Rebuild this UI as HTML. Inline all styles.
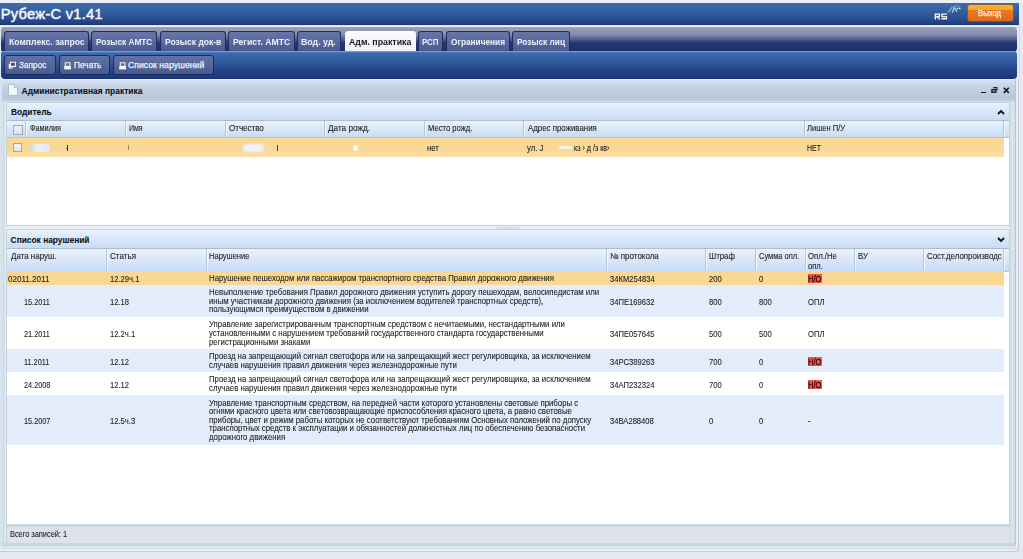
<!DOCTYPE html><html><head><meta charset="utf-8"><style>
*{margin:0;padding:0;box-sizing:border-box}
html,body{width:1023px;height:559px;overflow:hidden}
body{position:relative;background:#e5e9f4;font-family:"Liberation Sans", sans-serif;}
.a{position:absolute}
.t{position:absolute;white-space:nowrap;line-height:1}
.g{-webkit-text-stroke:0.08px currentColor}
.g2{-webkit-text-stroke:0.1px currentColor}
</style></head><body>
<div class="a" style="left:0;top:0;width:1023px;height:3px;background:#eceff7"></div>
<div class="a" style="left:0;top:3px;width:1019px;height:22px;background:linear-gradient(#3f6caa,#2f5798 55%,#21417f 92%,#1a3470)"></div>
<div class="t " style="left:0.8px;top:6.54px;font-size:14.6px;font-weight:400;color:#f4f6fb;-webkit-text-stroke:0.5px #f4f6fb;letter-spacing:0.3px;">Рубеж-С v1.41</div>

<svg class="a" style="left:934px;top:5px" width="28" height="16" viewBox="0 0 28 16"><path d="M1.4 14.4V9.1h3.9v2.5H1.4M3.3 11.6l2.3 2.8" fill="none" stroke="#f2f5fb" stroke-width="1.45"/><path d="M12.8 9.1H7.9v2.5h4.5v2.1H7.4" fill="none" stroke="#f2f5fb" stroke-width="1.45"/></svg>
<svg class="a" style="left:944px;top:3px" width="20" height="12" viewBox="0 0 20 12"><path d="M4.3 9.6L8.2 3.8" stroke="#86a8d6" stroke-width="1.5" fill="none"/><path d="M8.2 9.6L10.3 4.6L12.9 8.8" stroke="#a0bfd6" stroke-width="1.5" fill="none"/><path d="M8.5 3.8Q12 2.2 16.5 3" stroke="#7399c8" stroke-width="1.2" fill="none"/><circle cx="13.4" cy="5.4" r="0.9" fill="#d6eee6"/><circle cx="15.6" cy="5.4" r="0.9" fill="#d6eee6"/></svg>
<div class="a" style="left:968px;top:5px;width:45px;height:15.5px;border-radius:2px;background:linear-gradient(#f6b634,#f0a42a 30%,#e97a1e 33%,#e46f1a 75%,#dc6a1c);box-shadow:0 0 0 0.6px #b85a18"></div>
<div class="t " style="left:978.4px;top:8.89px;font-size:8.4px;font-weight:400;color:#fff3e2;-webkit-text-stroke:0.25px #fff3e2;transform:scaleX(0.92);transform-origin:0 0">Выход</div>

<div class="a" style="left:0;top:25px;width:1019px;height:2.5px;background:linear-gradient(#d6e2f0,#e8f2fc 50%,#c9d3e2)"></div>
<div class="a" style="left:1px;top:27px;width:1016px;height:25px;border-radius:3px 4px 4px 3px;background:linear-gradient(#9aa1bb,#858dac 30%,#4e5b8c 50%,#24376f 63%,#1c2f66)"></div>
<div class="a" style="left:4px;top:31px;width:85px;height:20px;border:1px solid #1f2c5e;border-bottom:none;border-radius:3px 3px 0 0;background:linear-gradient(#6676a6,#5868a0 55%,#4a5a90)"></div>
<div class="t " style="left:8.8px;top:37.74px;font-size:8.7px;font-weight:700;color:#eef1f8;transform:scaleX(0.997);transform-origin:0 0;">Комплекс. запрос</div>

<div class="a" style="left:91px;top:31px;width:66px;height:20px;border:1px solid #1f2c5e;border-bottom:none;border-radius:3px 3px 0 0;background:linear-gradient(#6676a6,#5868a0 55%,#4a5a90)"></div>
<div class="t " style="left:95.9px;top:37.74px;font-size:8.7px;font-weight:700;color:#eef1f8;transform:scaleX(0.951);transform-origin:0 0;">Розыск АМТС</div>

<div class="a" style="left:160px;top:31px;width:66px;height:20px;border:1px solid #1f2c5e;border-bottom:none;border-radius:3px 3px 0 0;background:linear-gradient(#6676a6,#5868a0 55%,#4a5a90)"></div>
<div class="t " style="left:165px;top:37.74px;font-size:8.7px;font-weight:700;color:#eef1f8;transform:scaleX(0.979);transform-origin:0 0;">Розыск док-в</div>

<div class="a" style="left:228px;top:31px;width:67px;height:20px;border:1px solid #1f2c5e;border-bottom:none;border-radius:3px 3px 0 0;background:linear-gradient(#6676a6,#5868a0 55%,#4a5a90)"></div>
<div class="t " style="left:232.7px;top:37.74px;font-size:8.7px;font-weight:700;color:#eef1f8;transform:scaleX(0.993);transform-origin:0 0;">Регист. АМТС</div>

<div class="a" style="left:297px;top:31px;width:44px;height:20px;border:1px solid #1f2c5e;border-bottom:none;border-radius:3px 3px 0 0;background:linear-gradient(#6676a6,#5868a0 55%,#4a5a90)"></div>
<div class="t " style="left:301.4px;top:37.74px;font-size:8.7px;font-weight:700;color:#eef1f8;transform:scaleX(1.009);transform-origin:0 0;">Вод. уд.</div>

<div class="a" style="left:345px;top:31px;width:71px;height:21px;border-radius:3px 3px 0 0;background:linear-gradient(#fafbfd,#eef1f7)"></div>
<div class="t " style="left:349px;top:37.64px;font-size:8.7px;font-weight:700;color:#1a1a1a;transform:scaleX(1.013);transform-origin:0 0;">Адм. практика</div>

<div class="a" style="left:418px;top:31px;width:25px;height:20px;border:1px solid #1f2c5e;border-bottom:none;border-radius:3px 3px 0 0;background:linear-gradient(#6676a6,#5868a0 55%,#4a5a90)"></div>
<div class="t " style="left:422.3px;top:37.74px;font-size:8.7px;font-weight:700;color:#eef1f8;transform:scaleX(0.906);transform-origin:0 0;">РСП</div>

<div class="a" style="left:446px;top:31px;width:64px;height:20px;border:1px solid #1f2c5e;border-bottom:none;border-radius:3px 3px 0 0;background:linear-gradient(#6676a6,#5868a0 55%,#4a5a90)"></div>
<div class="t " style="left:450.8px;top:37.74px;font-size:8.7px;font-weight:700;color:#eef1f8;transform:scaleX(0.954);transform-origin:0 0;">Ограничения</div>

<div class="a" style="left:512px;top:31px;width:58px;height:20px;border:1px solid #1f2c5e;border-bottom:none;border-radius:3px 3px 0 0;background:linear-gradient(#6676a6,#5868a0 55%,#4a5a90)"></div>
<div class="t " style="left:516.6px;top:37.74px;font-size:8.7px;font-weight:700;color:#eef1f8;transform:scaleX(0.954);transform-origin:0 0;">Розыск лиц</div>

<div class="a" style="left:1px;top:51px;width:1016px;height:27.5px;border-radius:3px 4px 4px 4px;background:linear-gradient(#80aae0,#3c6aad 7%,#3461a4 30%,#26468a 65%,#1b3574 100%)"></div>
<div class="a" style="left:4px;top:55px;width:52px;height:20px;border:1px solid #1c2b60;border-radius:3px;background:linear-gradient(#6272a2,#56679a 50%,#4a5b90)"></div>
<div class="t " style="left:19px;top:60.94px;font-size:8.7px;font-weight:400;color:#eef1f8;-webkit-text-stroke:0.25px #eef1f8;transform:scaleX(0.95);transform-origin:0 0;">Запрос</div>

<div class="a" style="left:59px;top:55px;width:51px;height:20px;border:1px solid #1c2b60;border-radius:3px;background:linear-gradient(#6272a2,#56679a 50%,#4a5b90)"></div>
<div class="t " style="left:74.2px;top:60.94px;font-size:8.7px;font-weight:400;color:#eef1f8;-webkit-text-stroke:0.25px #eef1f8;transform:scaleX(0.96);transform-origin:0 0;">Печать</div>

<div class="a" style="left:113px;top:55px;width:101px;height:20px;border:1px solid #1c2b60;border-radius:3px;background:linear-gradient(#6272a2,#56679a 50%,#4a5b90)"></div>
<div class="t " style="left:128px;top:60.94px;font-size:8.7px;font-weight:400;color:#eef1f8;-webkit-text-stroke:0.25px #eef1f8;transform:scaleX(1.0);transform-origin:0 0;">Список нарушений</div>

<svg class="a" style="left:8px;top:61px" width="9" height="8" viewBox="0 0 9 8"><path d="M2.4 1.3h5v4.1h-5z" fill="#3e4a7a" stroke="#f2f5fb" stroke-width="1.1"/><path d="M1.4 3v3.9h3.4" fill="none" stroke="#f2f5fb" stroke-width="1.4"/></svg>
<svg class="a" style="left:64px;top:61.5px" width="8" height="8" viewBox="0 0 8 8"><path d="M1.3 0.8h4.6v3.6H1.3z" fill="none" stroke="#eef2fa" stroke-width="1.1"/><path d="M0.2 4.2h6.8v3.2H0.2z" fill="#f4f7fc"/></svg>
<svg class="a" style="left:119px;top:61.5px" width="8" height="8" viewBox="0 0 8 8"><path d="M1.3 0.8h4.6v3.6H1.3z" fill="none" stroke="#eef2fa" stroke-width="1.1"/><path d="M0.2 4.2h6.8v3.2H0.2z" fill="#f4f7fc"/></svg>
<div class="a" style="left:0;top:78.5px;width:1019px;height:473.5px;background:#e9eef6;border-right:1px solid #c2ccd8;border-bottom:1px solid #c2ccd8;border-radius:0 0 3px 0"></div>
<div class="a" style="left:0;top:78.5px;width:1016px;height:468.5px;background:#d3dfe7;border-right:1px solid #bac6ce;border-radius:0 0 2px 0"></div>
<div class="a" style="left:1012px;top:100px;width:1px;height:444px;background:#e2eaf0"></div>
<div class="a" style="left:5px;top:100px;width:1px;height:444px;background:#e6eef2"></div>
<div class="a" style="left:2px;top:78.5px;width:1013px;height:1.5px;background:#e6edf6"></div>
<div class="a" style="left:2px;top:80px;width:1013px;height:21px;background:linear-gradient(#d8e3f1,#c5d3e6 30%,#b6c7dd 85%,#c2cede)"></div>
<div class="t g" style="left:21.6px;top:86.85px;font-size:8.45px;font-weight:700;color:#111;">Административная практика</div>

<div class="a" style="left:980.8px;top:91.7px;width:5px;height:1.4px;background:#1a1a1a"></div>
<svg class="a" style="left:991px;top:87px" width="7" height="6" viewBox="0 0 7 6"><path d="M2.3 0.6H5.9V3.4" fill="none" stroke="#1e1e1e" stroke-width="1.1"/><rect x="0.9" y="2.6" width="4" height="2.7" fill="#9aa4b0" stroke="#1e1e1e" stroke-width="1.3"/></svg>
<svg class="a" style="left:1003px;top:86.5px" width="7" height="7" viewBox="0 0 7 7"><path d="M0.8 0.8L5.8 5.9M5.8 0.8L0.8 5.9" stroke="#151515" stroke-width="1.6"/></svg>
<svg class="a" style="left:8px;top:84px" width="10" height="12" viewBox="0 0 10 12"><path d="M0.5 0.5h6l3 3v8h-9z" fill="#f6f9fc" stroke="#aebdd0" stroke-width="1"/><path d="M6.5 0.5v3h3" fill="#dde6f0" stroke="#aebdd0" stroke-width="1"/></svg>
<div class="a" style="left:6px;top:102px;width:1004px;height:124px;background:#fff;border:1px solid #c6d2dc;border-bottom:none"></div>
<div class="a" style="left:7px;top:103px;width:1002px;height:17.5px;background:linear-gradient(#eaf2fd,#d8e6f9 50%,#c9dcf5);border-bottom:1px solid #aebdd0"></div>
<div class="t g" style="left:10.9px;top:108.49px;font-size:8.4px;font-weight:700;color:#111;">Водитель</div>

<svg class="a" style="left:997px;top:109px" width="8" height="6" viewBox="0 0 8 6"><path d="M1 5L4 2L7 5" fill="none" stroke="#111" stroke-width="1.8"/></svg>
<div class="a" style="left:7px;top:120.5px;width:1002px;height:17.5px;background:linear-gradient(#eaf2fc,#d9e7f9 50%,#c9dcf5);border-bottom:1px solid #c7c1ad"></div>
<div class="a" style="left:25px;top:121px;width:1px;height:16px;background:#b4c6dc"></div>
<div class="a" style="left:26px;top:121px;width:1px;height:16px;background:#f4f8fd"></div>
<div class="a" style="left:125px;top:121px;width:1px;height:16px;background:#b4c6dc"></div>
<div class="a" style="left:126px;top:121px;width:1px;height:16px;background:#f4f8fd"></div>
<div class="a" style="left:225px;top:121px;width:1px;height:16px;background:#b4c6dc"></div>
<div class="a" style="left:226px;top:121px;width:1px;height:16px;background:#f4f8fd"></div>
<div class="a" style="left:324px;top:121px;width:1px;height:16px;background:#b4c6dc"></div>
<div class="a" style="left:325px;top:121px;width:1px;height:16px;background:#f4f8fd"></div>
<div class="a" style="left:424px;top:121px;width:1px;height:16px;background:#b4c6dc"></div>
<div class="a" style="left:425px;top:121px;width:1px;height:16px;background:#f4f8fd"></div>
<div class="a" style="left:523px;top:121px;width:1px;height:16px;background:#b4c6dc"></div>
<div class="a" style="left:524px;top:121px;width:1px;height:16px;background:#f4f8fd"></div>
<div class="a" style="left:804px;top:121px;width:1px;height:16px;background:#b4c6dc"></div>
<div class="a" style="left:805px;top:121px;width:1px;height:16px;background:#f4f8fd"></div>
<div class="a" style="left:1003px;top:121px;width:1px;height:16px;background:#b4c6dc"></div>
<div class="a" style="left:1004px;top:121px;width:1px;height:16px;background:#f4f8fd"></div>
<div class="a" style="left:13px;top:125px;width:10px;height:10px;border:1px solid #a3aab4;background:linear-gradient(#eef0f3,#dfe3e8)"></div>
<div class="t g2" style="left:29.6px;top:124.39px;font-size:8.4px;font-weight:400;color:#1e1e1e;transform:scaleX(0.871);transform-origin:0 0;">Фамилия</div>

<div class="t g2" style="left:129.3px;top:124.39px;font-size:8.4px;font-weight:400;color:#1e1e1e;transform:scaleX(0.836);transform-origin:0 0;">Имя</div>

<div class="t g2" style="left:229px;top:124.39px;font-size:8.4px;font-weight:400;color:#1e1e1e;transform:scaleX(0.955);transform-origin:0 0;">Отчество</div>

<div class="t g2" style="left:328px;top:124.39px;font-size:8.4px;font-weight:400;color:#1e1e1e;transform:scaleX(0.98);transform-origin:0 0;">Дата рожд.</div>

<div class="t g2" style="left:428px;top:124.39px;font-size:8.4px;font-weight:400;color:#1e1e1e;transform:scaleX(0.913);transform-origin:0 0;">Место рожд.</div>

<div class="t g2" style="left:527.6px;top:124.39px;font-size:8.4px;font-weight:400;color:#1e1e1e;transform:scaleX(0.94);transform-origin:0 0;">Адрес проживания</div>

<div class="t g2" style="left:807.1px;top:124.39px;font-size:8.4px;font-weight:400;color:#1e1e1e;transform:scaleX(0.905);transform-origin:0 0;">Лишен П/У</div>

<div class="a" style="left:7px;top:138px;width:997px;height:18.5px;background:linear-gradient(#fad792,#f9d896 60%,#fbdfa6)"></div>
<div class="a" style="left:13px;top:143px;width:9px;height:9px;border:1px solid #a3a9b0;background:linear-gradient(#eff1f4,#e0e4ea)"></div>
<div class="t g" style="left:427px;top:144.49px;font-size:8.4px;font-weight:400;color:#1a1a1a;transform:scaleX(0.93);transform-origin:0 0;">нет</div>

<div class="t g" style="left:527px;top:144.49px;font-size:8.4px;font-weight:400;color:#1a1a1a;transform:scaleX(0.93);transform-origin:0 0;">ул. J</div>

<div class="t g" style="left:807px;top:144.49px;font-size:8.4px;font-weight:400;color:#1a1a1a;transform:scaleX(0.83);transform-origin:0 0;">НЕТ</div>

<div class="t g" style="left:574px;top:144.49px;font-size:8.4px;font-weight:400;color:#1a1a1a;transform:scaleX(0.85);transform-origin:0 0;">кз › д /з кв›</div>

<div class="a" style="left:28.5px;top:144px;width:21px;height:8px;border-radius:2px 4px 4px 2px;background:linear-gradient(90deg,#d8d6d0,#eeeeec 40%,#e6eefa 70%,#dfe9f8);filter:blur(0.7px)"></div>
<div class="a" style="left:243px;top:144px;width:21px;height:8px;border-radius:4px;background:#eef3fb;filter:blur(1px)"></div>
<div class="a" style="left:559px;top:146px;width:13px;height:3px;border-radius:2px;background:#f6f3ea;filter:blur(0.6px)"></div>
<div class="a" style="left:353px;top:145px;width:5px;height:6px;border-radius:3px;background:#fbf6ec;filter:blur(0.6px)"></div>
<div class="a" style="left:67px;top:145px;width:1px;height:6px;background:#333"></div><div class="a" style="left:66px;top:147.5px;width:1.2px;height:1.2px;background:#555"></div>
<div class="a" style="left:128px;top:145px;width:1px;height:5px;background:#9a8a70"></div>
<div class="a" style="left:277px;top:145px;width:1px;height:6px;background:#444"></div>
<div class="a" style="left:6px;top:225px;width:1004px;height:5px;background:#e9eef5;border-top:1px solid #c5cdd6;border-bottom:1px solid #c5cdd6"></div>
<div class="a" style="left:497px;top:227px;width:22px;height:1.5px;background:#d9dee5"></div>
<div class="a" style="left:6px;top:229px;width:1004px;height:295px;background:#fff;border:1px solid #c6d2dc;border-bottom:none"></div>
<div class="a" style="left:7px;top:230px;width:1002px;height:18.5px;background:linear-gradient(#eaf2fd,#d8e6f9 50%,#c9dcf5);border-bottom:1px solid #aebdd0"></div>
<div class="t g" style="left:10.6px;top:236.09px;font-size:8.4px;font-weight:700;color:#111;">Список нарушений</div>

<svg class="a" style="left:997px;top:237px" width="8" height="6" viewBox="0 0 8 6"><path d="M1 1L4 4L7 1" fill="none" stroke="#111" stroke-width="1.8"/></svg>
<div class="a" style="left:7px;top:248.5px;width:1002px;height:23px;background:linear-gradient(#eaf2fc,#d9e7f9 50%,#c9dcf5);border-bottom:1px solid #c7c1ad"></div>
<div class="a" style="left:106px;top:249px;width:1px;height:21px;background:#b4c6dc"></div>
<div class="a" style="left:107px;top:249px;width:1px;height:21px;background:#f4f8fd"></div>
<div class="a" style="left:206px;top:249px;width:1px;height:21px;background:#b4c6dc"></div>
<div class="a" style="left:207px;top:249px;width:1px;height:21px;background:#f4f8fd"></div>
<div class="a" style="left:606px;top:249px;width:1px;height:21px;background:#b4c6dc"></div>
<div class="a" style="left:607px;top:249px;width:1px;height:21px;background:#f4f8fd"></div>
<div class="a" style="left:705px;top:249px;width:1px;height:21px;background:#b4c6dc"></div>
<div class="a" style="left:706px;top:249px;width:1px;height:21px;background:#f4f8fd"></div>
<div class="a" style="left:755px;top:249px;width:1px;height:21px;background:#b4c6dc"></div>
<div class="a" style="left:756px;top:249px;width:1px;height:21px;background:#f4f8fd"></div>
<div class="a" style="left:805px;top:249px;width:1px;height:21px;background:#b4c6dc"></div>
<div class="a" style="left:806px;top:249px;width:1px;height:21px;background:#f4f8fd"></div>
<div class="a" style="left:854px;top:249px;width:1px;height:21px;background:#b4c6dc"></div>
<div class="a" style="left:855px;top:249px;width:1px;height:21px;background:#f4f8fd"></div>
<div class="a" style="left:923px;top:249px;width:1px;height:21px;background:#b4c6dc"></div>
<div class="a" style="left:924px;top:249px;width:1px;height:21px;background:#f4f8fd"></div>
<div class="a" style="left:1003px;top:249px;width:1px;height:21px;background:#b4c6dc"></div>
<div class="a" style="left:1004px;top:249px;width:1px;height:21px;background:#f4f8fd"></div>
<div class="t g2" style="left:10.6px;top:252.49px;font-size:8.4px;font-weight:400;color:#1e1e1e;transform:scaleX(0.95);transform-origin:0 0;">Дата наруш.</div>

<div class="t g2" style="left:110.3px;top:252.49px;font-size:8.4px;font-weight:400;color:#1e1e1e;transform:scaleX(0.963);transform-origin:0 0;">Статья</div>

<div class="t g2" style="left:208.8px;top:252.49px;font-size:8.4px;font-weight:400;color:#1e1e1e;transform:scaleX(0.903);transform-origin:0 0;">Нарушение</div>

<div class="t g2" style="left:610px;top:252.49px;font-size:8.4px;font-weight:400;color:#1e1e1e;transform:scaleX(0.954);transform-origin:0 0;">№ протокола</div>

<div class="t g2" style="left:709px;top:252.49px;font-size:8.4px;font-weight:400;color:#1e1e1e;transform:scaleX(0.934);transform-origin:0 0;">Штраф</div>

<div class="t g2" style="left:758.8px;top:252.49px;font-size:8.4px;font-weight:400;color:#1e1e1e;transform:scaleX(0.89);transform-origin:0 0;">Сумма опл.</div>

<div class="t g2" style="left:808px;top:252.49px;font-size:8.4px;font-weight:400;color:#1e1e1e;transform:scaleX(0.921);transform-origin:0 0;">Опл./Не</div>

<div class="t g2" style="left:857.6px;top:252.49px;font-size:8.4px;font-weight:400;color:#1e1e1e;transform:scaleX(0.934);transform-origin:0 0;">ВУ</div>

<div class="t g2" style="left:927.3px;top:252.49px;font-size:8.4px;font-weight:400;color:#1e1e1e;transform:scaleX(0.942);transform-origin:0 0;">Сост.делопроизводс</div>

<div class="t g2" style="left:808px;top:262.09px;font-size:8.4px;font-weight:400;color:#1e1e1e;transform:scaleX(0.904);transform-origin:0 0;">опл.</div>

<div class="a" style="left:7px;top:271px;width:997px;height:13.5px;background:#fad792"></div>
<div class="t g" style="left:8px;top:274.84px;font-size:8.4px;font-weight:400;color:#1b1b1b;transform:scaleX(0.963);transform-origin:0 0;">02011.2011</div>

<div class="t g" style="left:110.3px;top:274.84px;font-size:8.4px;font-weight:400;color:#1b1b1b;transform:scaleX(0.91);transform-origin:0 0;">12.29ч.1</div>

<div class="t g" style="left:208.8px;top:273.84px;font-size:8.4px;font-weight:400;color:#1b1b1b;transform:scaleX(0.933);transform-origin:0 0;">Нарушение пешеходом или пассажиром транспортного средства Правил дорожного движения</div>

<div class="t g" style="left:610px;top:274.84px;font-size:8.4px;font-weight:400;color:#1b1b1b;transform:scaleX(0.91);transform-origin:0 0;">34КМ254834</div>

<div class="t g" style="left:709px;top:274.84px;font-size:8.4px;font-weight:400;color:#1b1b1b;transform:scaleX(0.91);transform-origin:0 0;">200</div>

<div class="t g" style="left:758.8px;top:274.84px;font-size:8.4px;font-weight:400;color:#1b1b1b;transform:scaleX(0.91);transform-origin:0 0;">0</div>

<div class="a" style="left:808px;top:274.1px;width:14px;height:8.8px;background:#ec5a4c"></div>
<div class="t g" style="left:808.3px;top:274.84px;font-size:8.4px;font-weight:400;color:#3a0606;-webkit-text-stroke:0.3px #3a0606;transform:scaleX(0.9);transform-origin:0 0;">Н/О</div>

<div class="a" style="left:7px;top:284.5px;width:997px;height:32.5px;background:#e3ecfb"></div>
<div class="t g" style="left:24px;top:297.84px;font-size:8.4px;font-weight:400;color:#1b1b1b;transform:scaleX(0.87);transform-origin:0 0;">15.2011</div>

<div class="t g" style="left:110.3px;top:297.84px;font-size:8.4px;font-weight:400;color:#1b1b1b;transform:scaleX(0.91);transform-origin:0 0;">12.18</div>

<div class="t g" style="left:208.8px;top:288.24px;font-size:8.4px;font-weight:400;color:#1b1b1b;transform:scaleX(0.933);transform-origin:0 0;">Невыполнение требования Правил дорожного движения уступить дорогу пешеходам, велосипедистам или</div>

<div class="t g" style="left:208.8px;top:296.84px;font-size:8.4px;font-weight:400;color:#1b1b1b;transform:scaleX(0.933);transform-origin:0 0;">иным участникам дорожного движения (за исключением водителей транспортных средств),</div>

<div class="t g" style="left:208.8px;top:305.44px;font-size:8.4px;font-weight:400;color:#1b1b1b;transform:scaleX(0.933);transform-origin:0 0;">пользующимся преимуществом в движении</div>

<div class="t g" style="left:610px;top:297.84px;font-size:8.4px;font-weight:400;color:#1b1b1b;transform:scaleX(0.91);transform-origin:0 0;">34ПЕ169632</div>

<div class="t g" style="left:709px;top:297.84px;font-size:8.4px;font-weight:400;color:#1b1b1b;transform:scaleX(0.91);transform-origin:0 0;">800</div>

<div class="t g" style="left:758.8px;top:297.84px;font-size:8.4px;font-weight:400;color:#1b1b1b;transform:scaleX(0.91);transform-origin:0 0;">800</div>

<div class="t g" style="left:808px;top:297.84px;font-size:8.4px;font-weight:400;color:#1b1b1b;transform:scaleX(0.91);transform-origin:0 0;">ОПЛ</div>

<div class="a" style="left:7px;top:317px;width:997px;height:32.0px;background:#ffffff"></div>
<div class="t g" style="left:24px;top:330.09px;font-size:8.4px;font-weight:400;color:#1b1b1b;transform:scaleX(0.87);transform-origin:0 0;">21.2011</div>

<div class="t g" style="left:110.3px;top:330.09px;font-size:8.4px;font-weight:400;color:#1b1b1b;transform:scaleX(0.91);transform-origin:0 0;">12.2ч.1</div>

<div class="t g" style="left:208.8px;top:320.49px;font-size:8.4px;font-weight:400;color:#1b1b1b;transform:scaleX(0.933);transform-origin:0 0;">Управление зарегистрированным транспортным средством с нечитаемыми, нестандартными или</div>

<div class="t g" style="left:208.8px;top:329.09px;font-size:8.4px;font-weight:400;color:#1b1b1b;transform:scaleX(0.933);transform-origin:0 0;">установленными с нарушением требований государственного стандарта государственными</div>

<div class="t g" style="left:208.8px;top:337.69px;font-size:8.4px;font-weight:400;color:#1b1b1b;transform:scaleX(0.933);transform-origin:0 0;">регистрационными знаками</div>

<div class="t g" style="left:610px;top:330.09px;font-size:8.4px;font-weight:400;color:#1b1b1b;transform:scaleX(0.91);transform-origin:0 0;">34ПЕ057645</div>

<div class="t g" style="left:709px;top:330.09px;font-size:8.4px;font-weight:400;color:#1b1b1b;transform:scaleX(0.91);transform-origin:0 0;">500</div>

<div class="t g" style="left:758.8px;top:330.09px;font-size:8.4px;font-weight:400;color:#1b1b1b;transform:scaleX(0.91);transform-origin:0 0;">500</div>

<div class="t g" style="left:808px;top:330.09px;font-size:8.4px;font-weight:400;color:#1b1b1b;transform:scaleX(0.91);transform-origin:0 0;">ОПЛ</div>

<div class="a" style="left:7px;top:349px;width:997px;height:23.2px;background:#e3ecfb"></div>
<div class="t g" style="left:24px;top:357.69px;font-size:8.4px;font-weight:400;color:#1b1b1b;transform:scaleX(0.87);transform-origin:0 0;">11.2011</div>

<div class="t g" style="left:110.3px;top:357.69px;font-size:8.4px;font-weight:400;color:#1b1b1b;transform:scaleX(0.91);transform-origin:0 0;">12.12</div>

<div class="t g" style="left:208.8px;top:352.39px;font-size:8.4px;font-weight:400;color:#1b1b1b;transform:scaleX(0.933);transform-origin:0 0;">Проезд на запрещающий сигнал светофора или на запрещающий жест регулировщика, за исключением</div>

<div class="t g" style="left:208.8px;top:360.99px;font-size:8.4px;font-weight:400;color:#1b1b1b;transform:scaleX(0.933);transform-origin:0 0;">случаев нарушения правил движения через железнодорожные пути</div>

<div class="t g" style="left:610px;top:357.69px;font-size:8.4px;font-weight:400;color:#1b1b1b;transform:scaleX(0.91);transform-origin:0 0;">34РС389263</div>

<div class="t g" style="left:709px;top:357.69px;font-size:8.4px;font-weight:400;color:#1b1b1b;transform:scaleX(0.91);transform-origin:0 0;">700</div>

<div class="t g" style="left:758.8px;top:357.69px;font-size:8.4px;font-weight:400;color:#1b1b1b;transform:scaleX(0.91);transform-origin:0 0;">0</div>

<div class="a" style="left:808px;top:357.0px;width:14px;height:8.8px;background:#ec5a4c"></div>
<div class="t g" style="left:808.3px;top:357.69px;font-size:8.4px;font-weight:400;color:#3a0606;-webkit-text-stroke:0.3px #3a0606;transform:scaleX(0.9);transform-origin:0 0;">Н/О</div>

<div class="a" style="left:7px;top:372.2px;width:997px;height:22.8px;background:#ffffff"></div>
<div class="t g" style="left:24px;top:380.69px;font-size:8.4px;font-weight:400;color:#1b1b1b;transform:scaleX(0.87);transform-origin:0 0;">24.2008</div>

<div class="t g" style="left:110.3px;top:380.69px;font-size:8.4px;font-weight:400;color:#1b1b1b;transform:scaleX(0.91);transform-origin:0 0;">12.12</div>

<div class="t g" style="left:208.8px;top:375.39px;font-size:8.4px;font-weight:400;color:#1b1b1b;transform:scaleX(0.933);transform-origin:0 0;">Проезд на запрещающий сигнал светофора или на запрещающий жест регулировщика, за исключением</div>

<div class="t g" style="left:208.8px;top:383.99px;font-size:8.4px;font-weight:400;color:#1b1b1b;transform:scaleX(0.933);transform-origin:0 0;">случаев нарушения правил движения через железнодорожные пути</div>

<div class="t g" style="left:610px;top:380.69px;font-size:8.4px;font-weight:400;color:#1b1b1b;transform:scaleX(0.91);transform-origin:0 0;">34АП232324</div>

<div class="t g" style="left:709px;top:380.69px;font-size:8.4px;font-weight:400;color:#1b1b1b;transform:scaleX(0.91);transform-origin:0 0;">700</div>

<div class="t g" style="left:758.8px;top:380.69px;font-size:8.4px;font-weight:400;color:#1b1b1b;transform:scaleX(0.91);transform-origin:0 0;">0</div>

<div class="a" style="left:808px;top:380.0px;width:14px;height:8.8px;background:#ec5a4c"></div>
<div class="t g" style="left:808.3px;top:380.69px;font-size:8.4px;font-weight:400;color:#3a0606;-webkit-text-stroke:0.3px #3a0606;transform:scaleX(0.9);transform-origin:0 0;">Н/О</div>

<div class="a" style="left:7px;top:395px;width:997px;height:49.5px;background:#e3ecfb"></div>
<div class="t g" style="left:24px;top:416.84px;font-size:8.4px;font-weight:400;color:#1b1b1b;transform:scaleX(0.87);transform-origin:0 0;">15.2007</div>

<div class="t g" style="left:110.3px;top:416.84px;font-size:8.4px;font-weight:400;color:#1b1b1b;transform:scaleX(0.91);transform-origin:0 0;">12.5ч.3</div>

<div class="t g" style="left:208.8px;top:398.64px;font-size:8.4px;font-weight:400;color:#1b1b1b;transform:scaleX(0.933);transform-origin:0 0;">Управление транспортным средством, на передней части которого установлены световые приборы с</div>

<div class="t g" style="left:208.8px;top:407.24px;font-size:8.4px;font-weight:400;color:#1b1b1b;transform:scaleX(0.933);transform-origin:0 0;">огнями красного цвета или световозвращающие приспособления красного цвета, а равно световые</div>

<div class="t g" style="left:208.8px;top:415.84px;font-size:8.4px;font-weight:400;color:#1b1b1b;transform:scaleX(0.933);transform-origin:0 0;">приборы, цвет и режим работы которых не соответствуют требованиям Основных положений по допуску</div>

<div class="t g" style="left:208.8px;top:424.44px;font-size:8.4px;font-weight:400;color:#1b1b1b;transform:scaleX(0.933);transform-origin:0 0;">транспортных средств к эксплуатации и обязанностей должностных лиц по обеспечению безопасности</div>

<div class="t g" style="left:208.8px;top:433.04px;font-size:8.4px;font-weight:400;color:#1b1b1b;transform:scaleX(0.933);transform-origin:0 0;">дорожного движения</div>

<div class="t g" style="left:610px;top:416.84px;font-size:8.4px;font-weight:400;color:#1b1b1b;transform:scaleX(0.91);transform-origin:0 0;">34ВА288408</div>

<div class="t g" style="left:709px;top:416.84px;font-size:8.4px;font-weight:400;color:#1b1b1b;transform:scaleX(0.91);transform-origin:0 0;">0</div>

<div class="t g" style="left:758.8px;top:416.84px;font-size:8.4px;font-weight:400;color:#1b1b1b;transform:scaleX(0.91);transform-origin:0 0;">0</div>

<div class="t g" style="left:808px;top:416.84px;font-size:8.4px;font-weight:400;color:#1b1b1b;transform:scaleX(0.91);transform-origin:0 0;">-</div>

<div class="a" style="left:6px;top:523.5px;width:1004px;height:3.5px;background:#c8d5dd"></div>
<div class="a" style="left:6px;top:527px;width:1004px;height:16px;background:#dee2ea;border-left:1px solid #c6d2dc"></div>
<div class="t g" style="left:9.6px;top:531.36px;font-size:8.2px;font-weight:400;color:#222;transform:scaleX(0.9);transform-origin:0 0;">Всего записей: 1</div>

<div class="a" style="left:2px;top:543px;width:1013px;height:3px;background:#cad8de"></div>
<div class="a" style="left:0;top:547.5px;width:1017px;height:1px;background:#d2dae4"></div>
<div class="a" style="left:0;top:78.5px;width:2px;height:468.5px;background:#d9e3ec"></div>
<div class="a" style="left:1019px;top:25px;width:1px;height:53px;background:#d3dae5"></div>
</body></html>
